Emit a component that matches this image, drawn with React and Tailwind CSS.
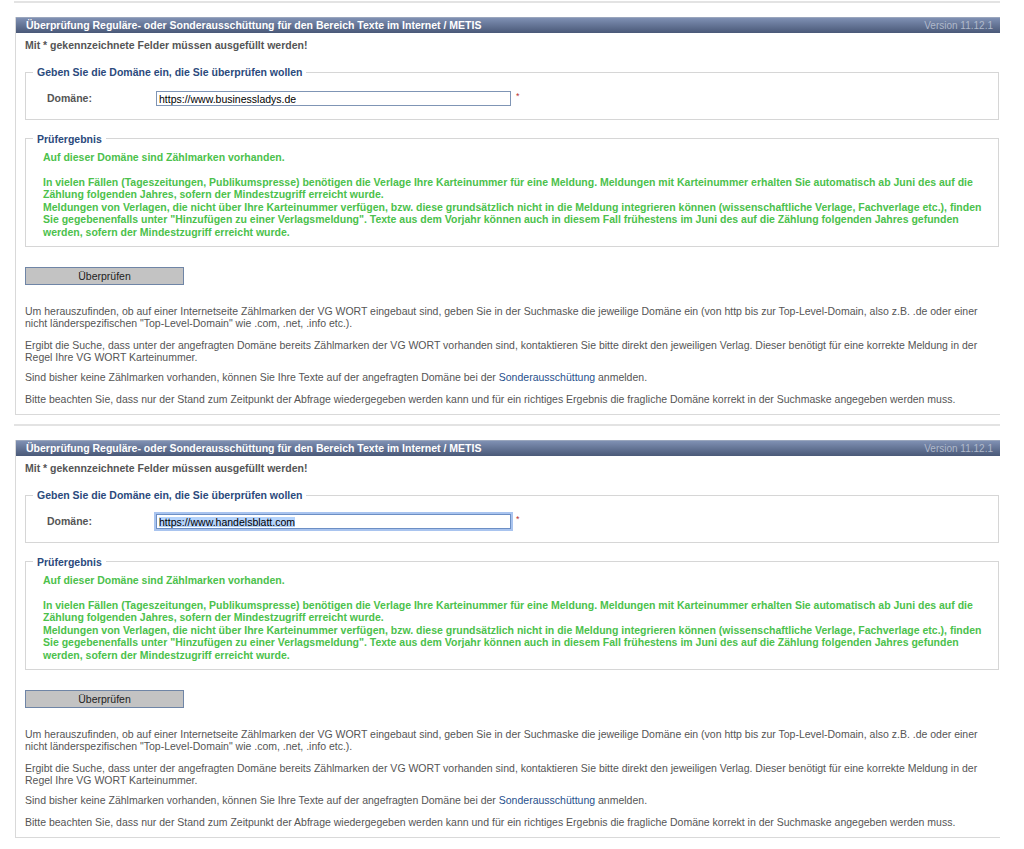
import React from 'react';

const font = { fontFamily: '"Liberation Sans", Arial, Helvetica, sans-serif' };

function DomainField({ value, selected }) {
    return (
        <div
            className={`h-[15px] w-[355px] bg-white border flex items-center px-[2px] text-[10.5px] text-black leading-none ${selected ? "border-[#6d8fc4] shadow-[0_0_0_2px_#a9c4ef]" : "border-[#7f95b5]"}`}
        >
            <span className={selected ? "bg-[#b5d3fb]" : ""}>{value}</span>
        </div>
    );
}

function Panel({ domain, selected }) {
    return (
        <div className="border-l border-b border-[#d9d9d9]">
            {/* Kopfzeile */}
            <div className="h-[16px] flex items-center justify-between pl-[10px] pr-[7px] bg-gradient-to-b from-[#7f90b3] to-[#4a5978] border-t border-[#9aa6bd]">
                <span className="text-white font-bold text-[10.5px]">
                    Überprüfung Reguläre- oder Sonderausschüttung für den Bereich Texte im Internet / METIS
                </span>
                <span className="text-[#b0b9cb] text-[10px]">Version 11.12.1</span>
            </div>

            <div className="pl-[9px] pr-[1px] pt-[6px] pb-[9px]">
                <p className="text-[10.5px] leading-[12px] font-bold text-[#555]">
                    Mit * gekennzeichnete Felder müssen ausgefüllt werden!
                </p>

                <fieldset className="mt-[15px] border border-[#d6d6d6] pb-[12px]">
                    <legend className="ml-[7px] px-[4px] text-[10.5px] leading-[12px] font-bold text-[#2b4a7c]">
                        Geben Sie die Domäne ein, die Sie überprüfen wollen
                    </legend>
                    <div className="flex items-center mt-[13px]">
                        <label className="w-[130px] pl-[21px] text-[10.5px] font-bold text-[#555]">Domäne:</label>
                        <DomainField value={domain} selected={selected}/>
                        <span className="ml-[5px] text-[9px] text-[#b33] leading-none -mt-[4px]">*</span>
                    </div>
                </fieldset>

                <fieldset className="mt-[13px] border border-[#d6d6d6] pb-[8px]">
                    <legend className="ml-[7px] px-[4px] text-[10.5px] leading-[12px] font-bold text-[#2b4a7c]">
                        Prüfergebnis
                    </legend>
                    <p className="pl-[17px] pt-[6px] text-[10.5px] leading-[12.5px] font-bold text-[#4cc14c]">
                        Auf dieser Domäne sind Zählmarken vorhanden.<br/><br/>
                        In vielen Fällen (Tageszeitungen, Publikumspresse) benötigen die Verlage Ihre Karteinummer für eine Meldung. Meldungen mit Karteinummer erhalten Sie automatisch ab Juni des auf die<br/>
                        Zählung folgenden Jahres, sofern der Mindestzugriff erreicht wurde.<br/>
                        Meldungen von Verlagen, die nicht über Ihre Karteinummer verfügen, bzw. diese grundsätzlich nicht in die Meldung integrieren können (wissenschaftliche Verlage, Fachverlage etc.), finden<br/>
                        Sie gegebenenfalls unter "Hinzufügen zu einer Verlagsmeldung". Texte aus dem Vorjahr können auch in diesem Fall frühestens im Juni des auf die Zählung folgenden Jahres gefunden<br/>
                        werden, sofern der Mindestzugriff erreicht wurde.
                    </p>
                </fieldset>

                <button
                    type="button"
                    className="mt-[20px] ml-0 w-[159px] h-[18px] bg-[#c3c3c3] border border-[#6f85a6] text-[10.5px] text-[#222] leading-none"
                >
                    Überprüfen
                </button>

                <div className="mt-[18px] text-[10.5px] leading-[12px] text-[#555]">
                    <p>
                        Um herauszufinden, ob auf einer Internetseite Zählmarken der VG WORT eingebaut sind, geben Sie in der Suchmaske die jeweilige Domäne ein (von http bis zur Top-Level-Domain, also z.B. .de oder einer<br/>
                        nicht länderspezifischen "Top-Level-Domain" wie .com, .net, .info etc.).
                    </p>
                    <p className="mt-[10px]">
                        Ergibt die Suche, dass unter der angefragten Domäne bereits Zählmarken der VG WORT vorhanden sind, kontaktieren Sie bitte direkt den jeweiligen Verlag. Dieser benötigt für eine korrekte Meldung in der<br/>
                        Regel Ihre VG WORT Karteinummer.
                    </p>
                    <p className="mt-[8px]">
                        Sind bisher keine Zählmarken vorhanden, können Sie Ihre Texte auf der angefragten Domäne bei der{" "}
                        <a href="#" className="text-[#1f4f8c]">Sonderausschüttung</a> anmelden.
                    </p>
                    <p className="mt-[10px]">
                        Bitte beachten Sie, dass nur der Stand zum Zeitpunkt der Abfrage wiedergegeben werden kann und für ein richtiges Ergebnis die fragliche Domäne korrekt in der Suchmaske angegeben werden muss.
                    </p>
                </div>
            </div>
        </div>
    );
}

export default function App() {
    return (
        <div className="w-[1024px] min-h-[849px] bg-white pt-[1px] pl-[15px] pr-[24px]" style={font}>
            <div className="h-[2px] bg-[#e3e3e3] -ml-[1px]"/>
            <div className="mt-[14px]">
                <Panel domain="https://www.businessladys.de"/>
            </div>
            <div className="mt-[9px] h-[2px] bg-[#e3e3e3] -ml-[1px]"/>
            <div className="mt-[14px]">
                <Panel domain="https://www.handelsblatt.com" selected/>
            </div>
        </div>
    );
}
